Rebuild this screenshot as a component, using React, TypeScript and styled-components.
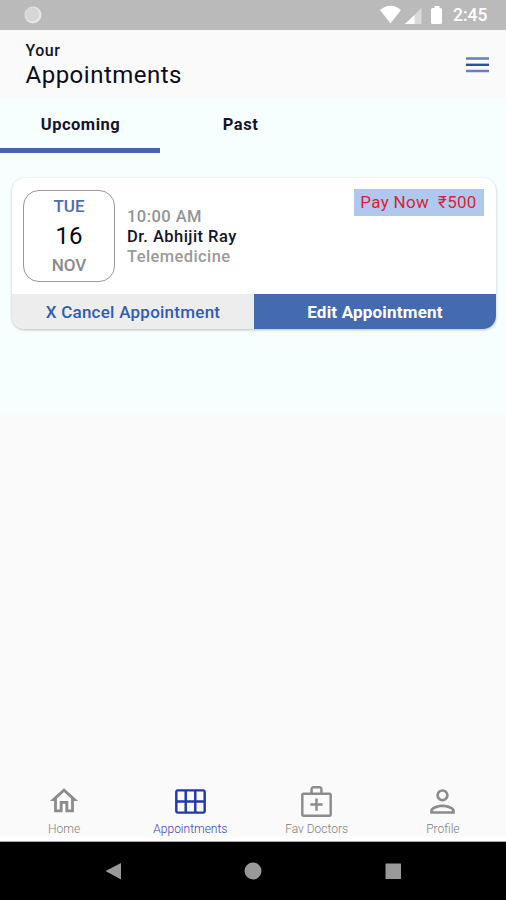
import React from "react";
import styled, { createGlobalStyle } from "styled-components";

const GlobalStyle = createGlobalStyle`
  * { box-sizing: border-box; }
  body { margin: 0; background: #fafafa; font-family: Roboto, "Liberation Sans", sans-serif; }
  button { font-family: inherit; border: 0; padding: 0; margin: 0; background: none; }
`;

const Screen = styled.div`
  width: 506px;
  height: 900px;
  display: flex;
  flex-direction: column;
  overflow: hidden;
  background: #fafafa;
`;

const Text = styled.span<{
  $size: number;
  $line: number;
  $color?: string;
  $weight?: number;
  $spacing?: number;
}>`
  display: block;
  white-space: pre;
  font-size: ${(p) => p.$size}px;
  line-height: ${(p) => p.$line}px;
  color: ${(p) => p.$color ?? "#14142a"};
  font-weight: ${(p) => p.$weight ?? 500};
  letter-spacing: ${(p) => p.$spacing ?? 0}px;
`;

const StatusBar = styled.header`
  height: 30px;
  flex: none;
  display: flex;
  align-items: center;
  justify-content: space-between;
  padding: 0 18.5px 0 24px;
  background: #bababa;
`;

const StatusIcons = styled.div`
  display: flex;
  align-items: center;
  svg { display: block; }
`;

const Header = styled.div`
  height: 68px;
  flex: none;
  display: flex;
  justify-content: space-between;
  padding: 11px 17px 0 25.5px;
`;

const MenuButton = styled.button`
  height: 48px;
  display: flex;
  align-items: center;
  svg { display: block; }
`;

const Content = styled.main`
  height: 317px;
  flex: none;
  background: #f6fefe;
`;

const Tabs = styled.nav`
  display: flex;
  height: 55px;
`;

const Tab = styled.button<{ $active?: boolean }>`
  width: 160px;
  display: flex;
  justify-content: center;
  padding: 17px 0 0 1px;
  border-bottom: 5px solid ${(p) => (p.$active ? "#4267ad" : "transparent")};
`;

const Card = styled.article`
  width: 484px;
  height: 151px;
  margin: 25px 0 0 12px;
  display: flex;
  flex-direction: column;
  border-radius: 13px;
  overflow: hidden;
  background: #fff;
  box-shadow: 0 1px 3px rgba(0, 0, 0, 0.25);
`;

const CardBody = styled.div`
  height: 116px;
  flex: none;
  display: flex;
  padding: 12px 12.5px 0 11px;
`;

const DateBox = styled.div`
  width: 92px;
  height: 92px;
  display: flex;
  flex-direction: column;
  align-items: center;
  padding-top: 3px;
  border: 1px solid #999;
  border-radius: 16px;
`;

const Details = styled.div`
  flex: 1;
  padding: 17px 0 0 12px;
`;

const PayBadge = styled.button`
  width: 130px;
  height: 27px;
  margin-top: -1px;
  display: flex;
  align-items: center;
  justify-content: center;
  background: #b1c8ee;
`;

const Actions = styled.div`
  display: flex;
  flex: 1;
`;

const Action = styled.button<{ $primary?: boolean }>`
  flex: 1;
  display: flex;
  align-items: center;
  justify-content: center;
  padding-top: 1px;
  background: ${(p) => (p.$primary ? "#446bb0" : "#ededed")};
`;

const Spacer = styled.div`
  flex: 1;
`;

const BottomNav = styled.nav`
  height: 69px;
  flex: none;
  display: grid;
  grid-template-columns: repeat(4, 1fr);
  padding-left: 1px;
  border-bottom: 1px solid #a8a8a8;
  background: linear-gradient(#fafafa 62px, #fff 66px);
`;

const NavItem = styled.button`
  display: flex;
  flex-direction: column;
  align-items: center;
  justify-content: flex-start;
  padding-top: 9.5px;
`;

const NavIcon = styled.span`
  height: 37px;
  display: flex;
  align-items: center;
  margin-bottom: 1.5px;
  svg { display: block; }
`;

const SystemBar = styled.footer`
  height: 58px;
  flex: none;
  display: flex;
  align-items: center;
  justify-content: space-between;
  padding: 0 104px;
  background: #000;
  svg { display: block; }
`;

const navItems = [
  {
    label: "Home",
    size: 34,
    path: "M12 5.69l5 4.5V18h-2v-6H9v6H7v-7.81l5-4.5M12 3L2 12h3v8h6v-6h2v6h6v-8h3L12 3z",
  },
  {
    label: "Appointments",
    size: 37,
    active: true,
    path: "M20.200 4H3.800c-1 0-1.800.8-1.800 1.800v12.400c0 1 .8 1.800 1.800 1.800h16.400c1 0 1.800-.8 1.800-1.800V5.800c0-1-.8-1.800-1.800-1.800zM8.100 11.200H3.600V5.500h4.500zM14.300 11.200H9.700V5.500h4.600zM20.400 11.200h-4.500V5.500h4.500zM8.100 18.500H3.600v-5.700h4.500zM14.300 18.500H9.700v-5.700h4.600zM20.400 18.500h-4.500v-5.700h4.500z",
  },
  {
    label: "Fav Doctors",
    size: 37,
    path: "M20.500 6.200h-4.500V4c0-1.100-.9-2-2-2h-4c-1.100 0-2 .9-2 2v2.200H3.500c-.83 0-1.500.67-1.500 1.500v12.800c0 .83.67 1.500 1.500 1.500h17c.83 0 1.500-.67 1.500-1.500V7.700c0-.83-.67-1.500-1.500-1.500zM9.600 3.600h4.800v2.600H9.600V3.600zM20.400 20.400H3.600V7.800h16.800v12.600zM12.800 10h-1.600v3.200H8v1.600h3.200V18h1.600v-3.200H16v-1.600h-3.200z",
  },
  {
    label: "Profile",
    size: 37,
    path: "M12 5.700c1.270 0 2.300 1.030 2.300 2.300s-1.030 2.300-2.300 2.300-2.300-1.030-2.300-2.300 1.030-2.300 2.300-2.300m0 10c2.970 0 6.100 1.460 6.100 2.100v.5H5.900v-.5c0-.64 3.130-2.100 6.100-2.100M12 4C9.790 4 8 5.790 8 8s1.790 4 4 4 4-1.790 4-4-1.790-4-4-4zm0 10c-2.670 0-8 1.340-8 4v2h16v-2c0-2.660-5.330-4-8-4z",
  },
];

export default function App() {
  return (
    <Screen>
      <GlobalStyle />
      <StatusBar>
        <svg width="18" height="18" viewBox="0 0 18 18">
          <circle cx="9" cy="9" r="8.5" fill="#e6e6e6" />
          <circle cx="8.2" cy="8.2" r="7" fill="#d6d6d6" />
        </svg>
        <StatusIcons>
          <svg width="73" height="20" viewBox="0 0 73 20">
            <path d="M0 5Q10.5-3.6 21 5L10.5 18.5Z" fill="#fff" />
            <path d="M41.5 3V19H25Z" fill="#dadada" />
            <path d="M34.5 10V19H25Z" fill="#fff" />
            <path
              d="M54.5 3V1h5v2h1q1.500 0 1.500 1.500v13q0 1.500-1.500 1.500h-8q-1.500 0-1.500-1.500v-13q0-1.500 1.500-1.500Z"
              fill="#fff"
            />
          </svg>
          <Text $size={17.5} $line={32} $color="#fff">2:45</Text>
        </StatusIcons>
      </StatusBar>

      <Header>
        <div>
          <Text $size={16} $line={20} $spacing={0.5}>Your</Text>
          <Text $size={24} $line={29} $weight={400} $color="#0c0c18" $spacing={0.5}>Appointments</Text>
        </div>
        <MenuButton aria-label="Menu">
          <svg width="23" height="18" viewBox="0 0 23 18">
            <path d="M0 2.5H23M0 15H23" stroke="#6981b8" strokeWidth="2.6" />
            <path d="M0 8.8H23" stroke="#2850a0" strokeWidth="2.4" />
          </svg>
        </MenuButton>
      </Header>

      <Content>
        <Tabs>
          <Tab $active>
            <Text $size={16.5} $line={20} $weight={700} $spacing={0.5}>Upcoming</Text>
          </Tab>
          <Tab>
            <Text $size={16.5} $line={20} $weight={700} $spacing={0.5}>Past</Text>
          </Tab>
        </Tabs>
        <Card>
          <CardBody>
            <DateBox>
              <Text $size={17} $line={24} $color="#4a6db5">TUE</Text>
              <Text $size={24} $line={37} $color="#08080c" $weight={400}>16</Text>
              <Text $size={17} $line={21} $color="#8a8a8a">NOV</Text>
            </DateBox>
            <Details>
              <Text $size={16.5} $line={20} $color="#949494" $spacing={0.45}>10:00 AM</Text>
              <Text $size={16.5} $line={20} $spacing={0.45}>Dr. Abhijit Ray</Text>
              <Text $size={16.5} $line={20} $color="#9a9a9a" $spacing={0.4}>Telemedicine</Text>
            </Details>
            <PayBadge>
              <Text $size={17} $line={27} $weight={400} $color="#d91f35" $spacing={0.3}>{"Pay Now  ₹500"}</Text>
            </PayBadge>
          </CardBody>
          <Actions>
            <Action>
              <Text $size={17} $line={35} $color="#325cad" $spacing={0.25}>X Cancel Appointment</Text>
            </Action>
            <Action $primary>
              <Text $size={17} $line={35} $color="#fff" $weight={700} $spacing={0.2}>Edit Appointment</Text>
            </Action>
          </Actions>
        </Card>
      </Content>

      <Spacer />

      <BottomNav>
        {navItems.map((item) => (
          <NavItem key={item.label}>
            <NavIcon>
              <svg width={item.size} height={item.size} viewBox="0 0 24 24">
                <path d={item.path} fillRule="evenodd" fill={item.active ? "#2338ac" : "#8c8c8c"} />
              </svg>
            </NavIcon>
            <Text
              $size={12}
              $line={16}
              $weight={300}
              $color={item.active ? "#3840b4" : "#808080"}
            >
              {item.label}
            </Text>
          </NavItem>
        ))}
      </BottomNav>

      <SystemBar>
        <svg width="18" height="18" viewBox="0 0 18 18">
          <path d="M1.5 9L17 1V17.5Z" fill="#999" />
        </svg>
        <svg width="18" height="18" viewBox="0 0 18 18">
          <circle cx="9" cy="9" r="8.5" fill="#999" />
        </svg>
        <svg width="18" height="18" viewBox="0 0 18 18">
          <rect x="1.5" y="1.5" width="15.5" height="15.5" rx="0.5" fill="#999" />
        </svg>
      </SystemBar>
    </Screen>
  );
}
